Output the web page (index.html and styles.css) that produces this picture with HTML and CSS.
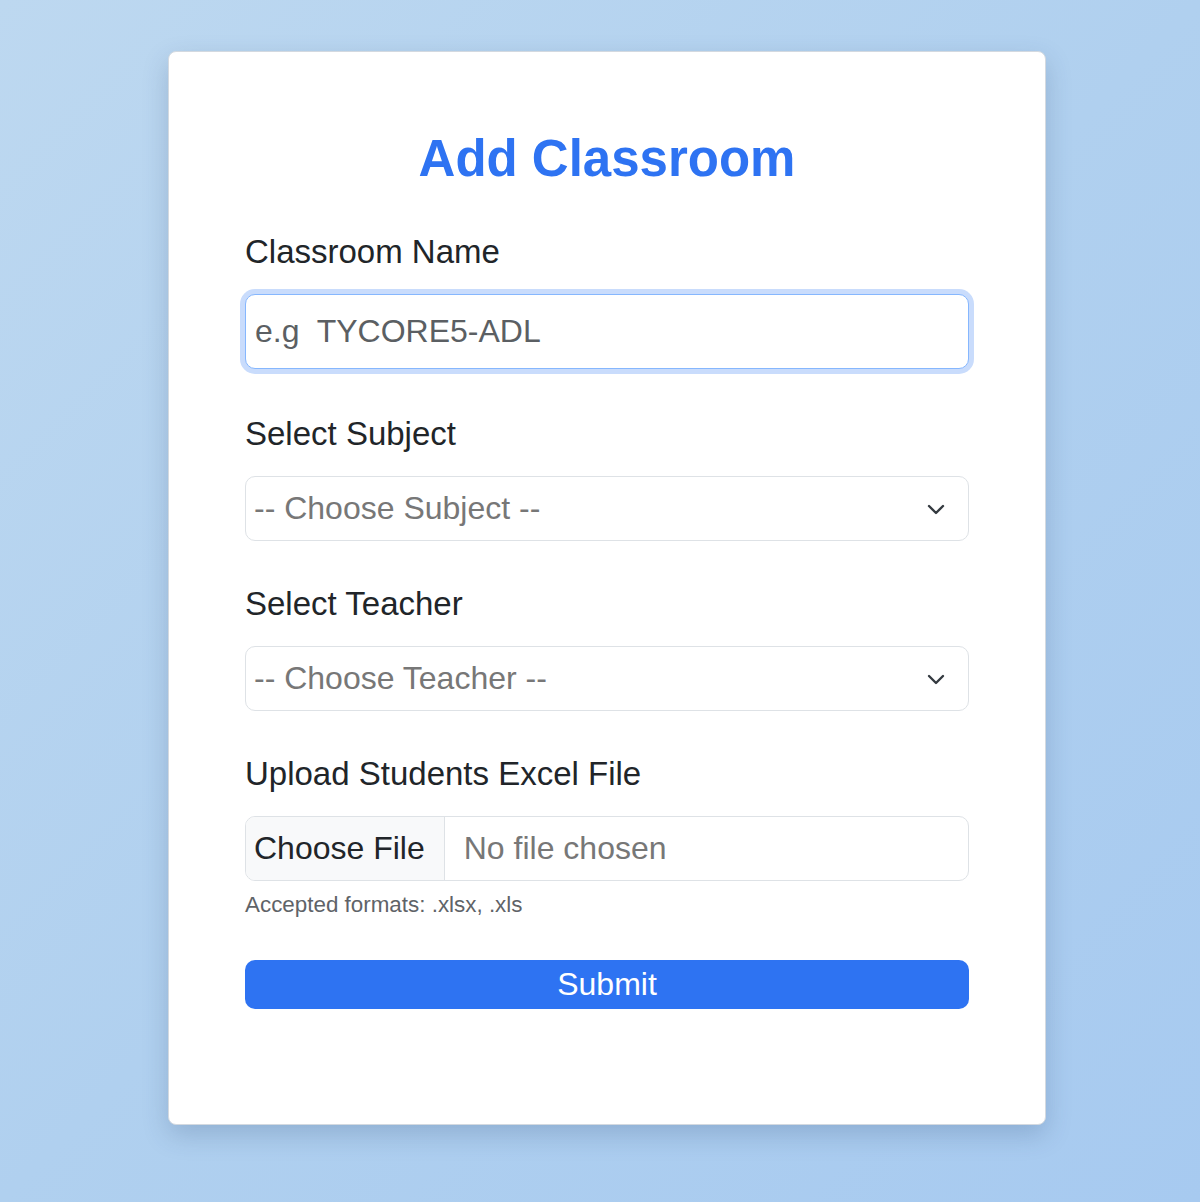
FILE: index.html
```html
<!DOCTYPE html>
<html lang="en">
  <head>
    <meta charset="UTF-8" />
    <meta name="viewport" content="width=device-width, initial-scale=1.0" />
    <title>Add Classroom</title>
    <link rel="stylesheet" href="styles.css">
  </head>
  <body>
    <div class="page">
      <div class="card">
        <h1 class="title">Add Classroom</h1>
        <form class="form" onsubmit="return false">
          <div class="group group-name">
            <label class="label" for="className">Classroom Name</label>
            <input class="control is-focused" id="className" type="text" placeholder="e.g  TYCORE5-ADL" autofocus />
          </div>
          <div class="group">
            <label class="label" for="subject">Select Subject</label>
            <div class="select-wrap">
              <select class="control select" id="subject">
                <option value="">-- Choose Subject --</option>
              </select>
              <svg class="chevron" width="18" height="12" viewBox="0 0 18 12">
                <path d="M2 3l7 7 7-7" fill="none" stroke="#343a40" stroke-width="2.4" stroke-linecap="round" stroke-linejoin="round"/>
              </svg>
            </div>
          </div>
          <div class="group">
            <label class="label" for="teacher">Select Teacher</label>
            <div class="select-wrap">
              <select class="control select" id="teacher">
                <option value="">-- Choose Teacher --</option>
              </select>
              <svg class="chevron" width="18" height="12" viewBox="0 0 18 12">
                <path d="M2 3l7 7 7-7" fill="none" stroke="#343a40" stroke-width="2.4" stroke-linecap="round" stroke-linejoin="round"/>
              </svg>
            </div>
          </div>
          <div class="group group-file">
            <label class="label" for="excelFile">Upload Students Excel File</label>
            <input class="control file" id="excelFile" type="file" accept=".xlsx,.xls" />
            <div class="hint">Accepted formats: .xlsx, .xls</div>
          </div>
          <button class="submit" type="submit">Submit</button>
        </form>
      </div>
    </div>
  </body>
</html>
```

FILE: styles.css
```css
* {
  box-sizing: border-box;
}
html,
body {
  margin: 0;
  padding: 0;
}
body {
  min-height: 100vh;
  background: linear-gradient(135deg, #bdd8f0 0%, #b0d0ef 50%, #a7caf0 100%);
  font-family: "Liberation Sans", Arial, Helvetica, sans-serif;
  color: #212529;
}
.page {
  display: flex;
  justify-content: center;
  padding: 51px 0 77px 14px;
}
.card {
  width: 878px;
  min-height: 1074px;
  background-color: #fff;
  border: 1px solid #d3d9e0;
  border-radius: 8px;
  box-shadow: 0 10px 26px rgba(40, 70, 110, 0.22);
  padding: 76px 76px 40px;
}
.title {
  margin: 0 0 39px;
  text-align: center;
  font-size: 51px;
  line-height: 61px;
  font-weight: 700;
  color: #2e73f2;
}
.group {
  margin-bottom: 39px;
}
.group-name {
  margin-bottom: 41px;
}
.label {
  display: block;
  font-size: 33px;
  line-height: 48px;
  margin-bottom: 18px;
  color: #212529;
}
.control {
  display: block;
  width: 100%;
  font-family: inherit;
  font-size: 32px;
  line-height: 37px;
  color: #212529;
  background-color: #fff;
  border: 1px solid #dee2e6;
  border-radius: 10px;
  padding: 18px 9px;
  outline: none;
  margin: 0;
}
.control::placeholder {
  color: #5b5f63;
}
.control.is-focused,
.control:focus {
  border-color: #86b7fe;
  box-shadow: 0 0 0 5px #c9dcfc;
}
.select-wrap {
  position: relative;
}
.select {
  -webkit-appearance: none;
  appearance: none;
  height: 65px;
  padding: 13px 60px 13px 8px;
  color: #777;
}
.chevron {
  position: absolute;
  right: 24px;
  top: 27px;
  pointer-events: none;
}
.file {
  height: 65px;
  padding: 0;
  color: #777;
  overflow: hidden;
}
.file::file-selector-button {
  height: 63px;
  font-family: inherit;
  font-size: 32px;
  color: #212529;
  background-color: #f8f9fa;
  border: none;
  border-right: 1px solid #dee2e6;
  border-radius: 0;
  padding: 0 19px 0 8px;
  margin: 0 19px 0 0;
}
.hint {
  font-size: 22.4px;
  line-height: 33px;
  margin-top: 7px;
  color: #5f6368;
}
.submit {
  display: block;
  width: 100%;
  font-family: inherit;
  font-size: 32px;
  line-height: 37px;
  padding: 6px 0;
  color: #fff;
  background-color: #2e73f2;
  border: none;
  border-radius: 10px;
  cursor: pointer;
}
```
